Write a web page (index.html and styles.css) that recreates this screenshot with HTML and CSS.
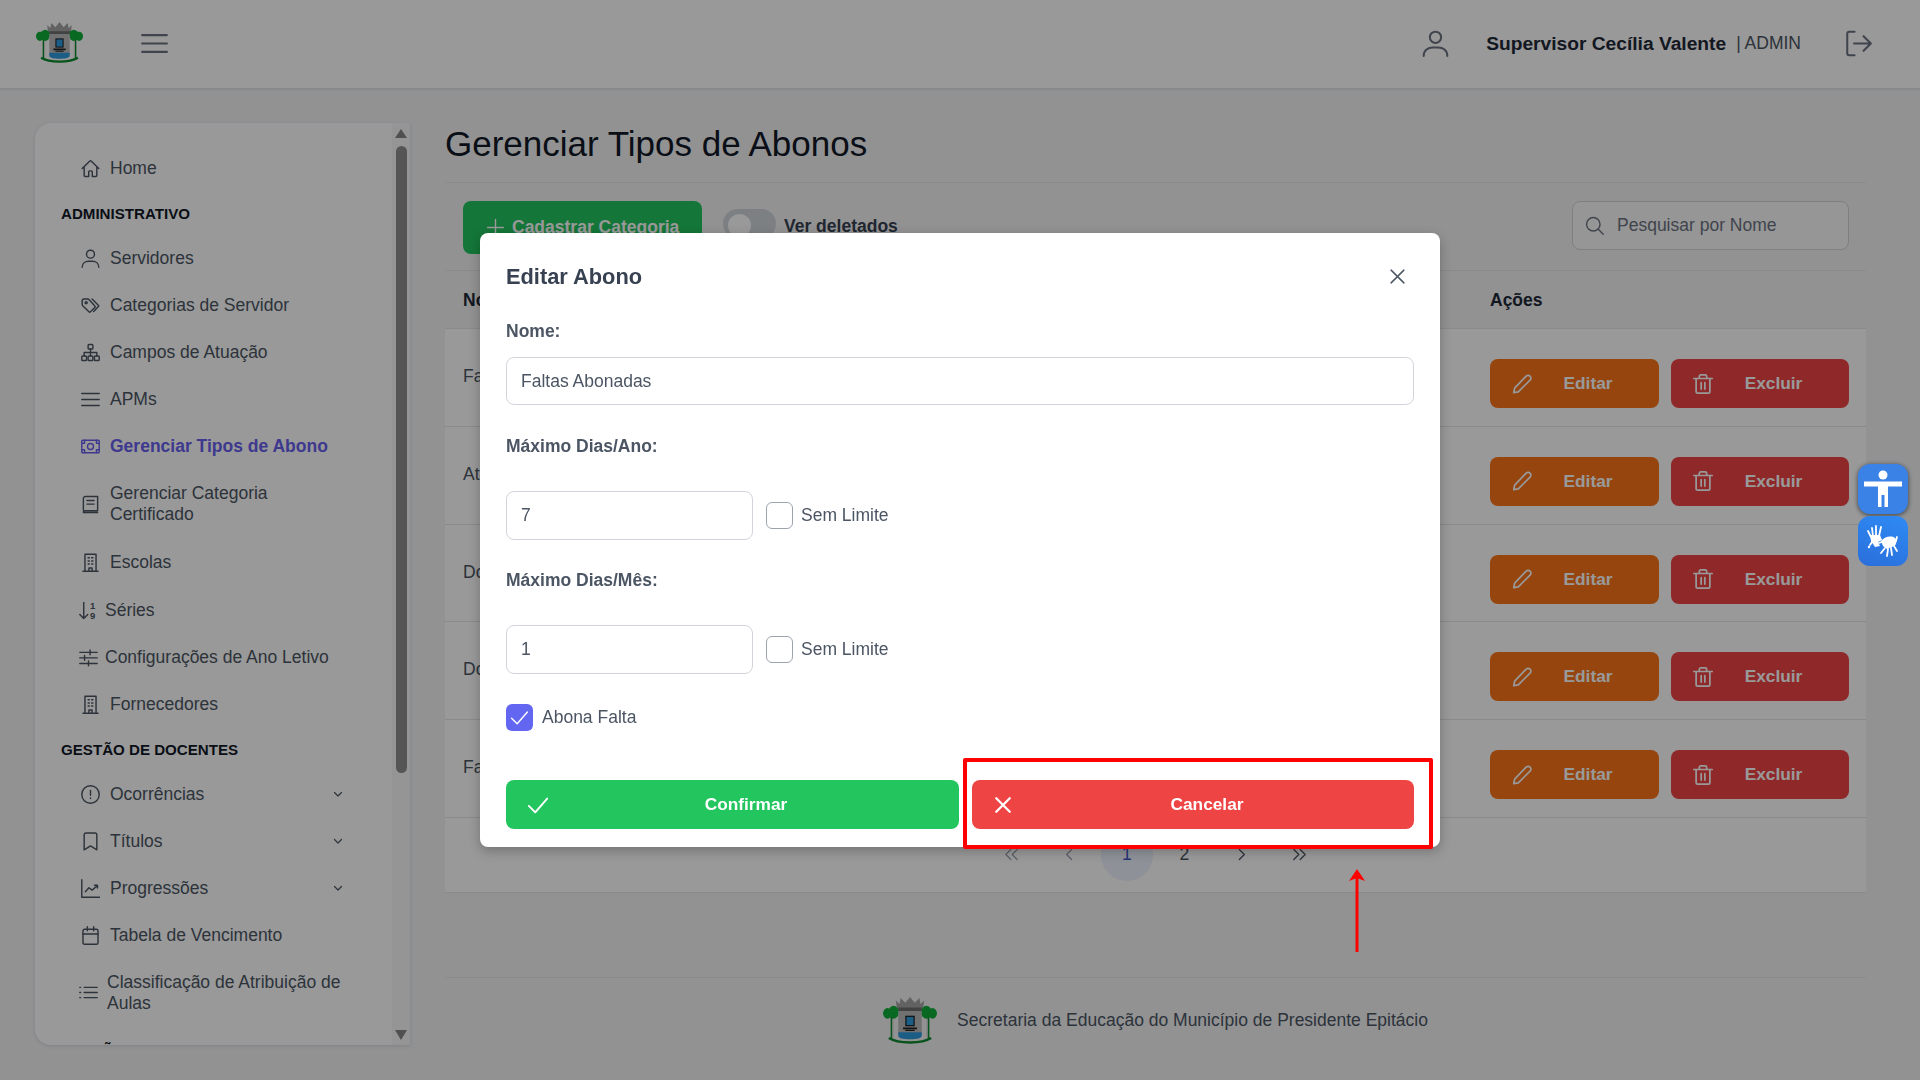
FILE: index.html
```html
<!DOCTYPE html>
<html lang="pt-BR">
<head>
    <meta charset="UTF-8">
    <title>Gerenciar Tipos de Abonos</title>
    <link rel="stylesheet" href="styles.css">
</head>
<body>

<!-- icon sheet -->
<svg class="sprite" xmlns="http://www.w3.org/2000/svg">
    <symbol id="i-home" viewBox="0 0 24 24"><path d="M1.500 12l9.700-9.500c.44-.439 1.152-.439 1.591 0L22.500 12M4 9.500v11.400c0 .621.504 1.125 1.125 1.125H9.750v-5.900c0-.621.504-1.125 1.125-1.125h2.250c.621 0 1.125.504 1.125 1.125V22h4.600c.621 0 1.125-.504 1.125-1.125V9.500"/></symbol>
    <symbol id="i-user" viewBox="0 0 24 24"><circle cx="12" cy="6.500" r="5"/><path d="M1.500 23c0-5 4-7.500 8-7.500h5c4 0 8 2.500 8 7.500"/></symbol>
    <symbol id="i-tag" viewBox="0 0 24 24"><path d="M1.500 6V11c0 .6.300 1 .7 1.400l7.800 7.600c.6.600 1.400.600 2 0l5.500-5.500c.6-.6.600-1.400 0-2L10 4.300C9.500 3.900 9.100 3.700 8.500 3.700H3.800C2.500 3.700 1.500 4.700 1.500 6z"/><path d="M14 3.700l8.200 8.300c.3.300.3.700 0 1L16 19.500"/><circle cx="6.500" cy="8.500" r="1.300"/></symbol>
    <symbol id="i-sitemap" viewBox="0 0 24 24"><rect x="9" y="2" width="6" height="5.500" rx="1"/><rect x="1" y="16.500" width="6" height="5.500" rx="1"/><rect x="9" y="16.500" width="6" height="5.500" rx="1"/><rect x="17" y="16.500" width="6" height="5.500" rx="1"/><path d="M12 7.500v9M4 16.500V12h16v4.500"/></symbol>
    <symbol id="i-bars" viewBox="0 0 24 24"><path d="M1 4.500h22M1 12h22M1 19.500h22"/></symbol>
    <symbol id="i-money" viewBox="0 0 24 24"><rect x="1" y="4" width="22" height="16" rx="1"/><circle cx="12" cy="12" r="3.800"/><path d="M1 8h3.500V4M23 8h-3.500V4M1 16h3.500v4M23 16h-3.500v4"/></symbol>
    <symbol id="i-book" viewBox="0 0 24 24"><path d="M3 19V4.500C3 3.100 4 2 5.500 2h15.500v18H5.500C4 20 3 21 3 22h18"/><path d="M7.500 7h9M7.500 11.500h9"/></symbol>
    <symbol id="i-building" viewBox="0 0 24 24"><path d="M2.500 23h19M5 23V1.500h14V23M10 23v-4h4v4"/><path d="M9 6h1.500M13.500 6H15M9 10h1.500M13.500 10H15M9 14h1.500M13.500 14H15"/></symbol>
    <symbol id="i-sliders" viewBox="0 0 24 24"><path d="M1 5.500h22M1 12.500h22M1 19.500h22M14 2.500v6M7 9.500v6M12 16.500v6"/></symbol>
    <symbol id="i-alert" viewBox="0 0 24 24"><circle cx="12" cy="12" r="11"/><path d="M12 7v6"/><path d="M12 16.500v.5"/></symbol>
    <symbol id="i-bookmark" viewBox="0 0 24 24"><path d="M4 3.500C4 2.200 5 1.200 6.300 1.200h11.400c1.300 0 2.300 1 2.300 2.300v19L12 17.500l-8 5z"/></symbol>
    <symbol id="i-chart" viewBox="0 0 24 24"><path d="M1 1v22h22.500"/><path d="M5.500 16l4.500-5 4 3 6.500-5.500M17 8h3.800v3.500"/></symbol>
    <symbol id="i-calendar" viewBox="0 0 24 24"><rect x="2.500" y="4" width="19" height="19" rx="2"/><path d="M2.500 10h19M8 1v5M16 1v5"/></symbol>
    <symbol id="i-list" viewBox="0 0 24 24"><path d="M6.500 5.500H23M6.500 12H23M6.500 18.500H23M1 5.500h1M1 12h1M1 18.500h1"/></symbol>
    <symbol id="i-chevron" viewBox="0 0 24 24"><path d="M5 9l7 7 7-7"/></symbol>
    <symbol id="i-search" viewBox="0 0 24 24"><circle cx="10.500" cy="10.500" r="8.500"/><path d="M16.500 16.500L23 23"/></symbol>
    <symbol id="i-logout" viewBox="0 0 24 24"><path d="M8.500 1.500H3.800C2.800 1.500 2 2.300 2 3.300v17.400c0 1 .8 1.800 1.800 1.800h4.700M8 12h15M16.500 5.500L23 12l-6.500 6.500"/></symbol>
    <symbol id="i-plus" viewBox="0 0 24 24"><path d="M12 2v20M2 12h20"/></symbol>
    <symbol id="i-pencil" viewBox="0 0 24 24"><path d="M16.500 3.500c1.300-1.300 3.200-1.300 4.300 0 1.200 1.200 1.200 3 0 4.200L8 20.500 3 21.500l1-5z"/></symbol>
    <symbol id="i-trash" viewBox="0 0 24 24"><path d="M2 6h20M8 6V3.500C8 2.700 8.700 2 9.500 2h5c.8 0 1.500.7 1.500 1.500V6M4.500 6v14.500c0 1 .8 1.500 1.500 1.500h12c.8 0 1.500-.5 1.500-1.500V6M10 10.500v7M14 10.500v7"/></symbol>
    <symbol id="i-check" viewBox="0 0 24 24"><path d="M2 13l7 7L22 5"/></symbol>
    <symbol id="i-close" viewBox="0 0 24 24"><path d="M3 3l18 18M21 3L3 21"/></symbol>
    <symbol id="i-emblem" viewBox="0 0 46 41">
        <path fill="#a3a3a3" d="M11 3l3 3 1-5 4 4 4-5 4 5 4-4 1 5 3-3-1 9H12z"/>
        <path fill="#6e6e6e" d="M13 9h20v3H13z"/>
        <ellipse cx="3.800" cy="14" rx="3.800" ry="4.500" fill="#0fae3a"/>
        <ellipse cx="9" cy="13" rx="4.500" ry="5.500" fill="#0fae3a"/>
        <ellipse cx="37" cy="13" rx="4.500" ry="5.500" fill="#0fae3a"/>
        <ellipse cx="42.200" cy="14" rx="3.800" ry="4.500" fill="#0fae3a"/>
        <path fill="#0c8a2e" d="M6.500 17H8V36H6.500zM38 17H39.500V36H38z"/>
        <path fill="#d8d8d8" d="M8 19H9V35H8zM37 19H38V35H37z"/>
        <path fill="#bcbcbc" d="M13 12h20v19H13z"/>
        <rect x="19.500" y="16.500" width="7" height="8" fill="#2f9be0" stroke="#1a1a1a"/>
        <path fill="#222" d="M17 26h12v1.500H17zM19 28h8v1H19z"/>
        <path fill="#2f9be0" d="M13 30h20v3c0 2-4 3-10 3s-10-1-10-3z"/>
        <path fill="none" stroke="#0c8a2e" stroke-width="2.200" d="M5 35c8 5 28 5 36 0"/>
    </symbol>
</svg>

<header class="topbar">
    <div class="topbar-left">
        <svg class="logo"><use href="#i-emblem"/></svg>
        <svg class="ico hamburger"><use href="#i-bars"/></svg>
    </div>
    <div class="topbar-right">
        <svg class="ico user-ico"><use href="#i-user"/></svg>
        <span class="user-name">Supervisor Cecília Valente</span>
        <span class="user-role">| ADMIN</span>
        <svg class="ico logout-ico"><use href="#i-logout"/></svg>
    </div>
</header>

<div class="layout">
    <aside class="sidebar">
        <nav class="menu">
            <a class="item"><svg class="ico"><use href="#i-home"/></svg><span>Home</span></a>
            <div class="section">ADMINISTRATIVO</div>
            <a class="item"><svg class="ico"><use href="#i-user"/></svg><span>Servidores</span></a>
            <a class="item"><svg class="ico"><use href="#i-tag"/></svg><span>Categorias de Servidor</span></a>
            <a class="item"><svg class="ico"><use href="#i-sitemap"/></svg><span>Campos de Atuação</span></a>
            <a class="item"><svg class="ico"><use href="#i-bars"/></svg><span>APMs</span></a>
            <a class="item active"><svg class="ico"><use href="#i-money"/></svg><span>Gerenciar Tipos de Abono</span></a>
            <a class="item two-line"><svg class="ico"><use href="#i-book"/></svg><span>Gerenciar Categoria Certificado</span></a>
            <a class="item"><svg class="ico"><use href="#i-building"/></svg><span>Escolas</span></a>
            <a class="item tight">
                <svg class="ico" viewBox="0 0 24 24"><path d="M6 2v20M1 17l5 5 5-5"/><text class="sort-num" x="14" y="10">1</text><text class="sort-num" x="14" y="23">9</text></svg>
                <span>Séries</span>
            </a>
            <a class="item tight"><svg class="ico"><use href="#i-sliders"/></svg><span>Configurações de Ano Letivo</span></a>
            <a class="item"><svg class="ico"><use href="#i-building"/></svg><span>Fornecedores</span></a>
            <div class="section">GESTÃO DE DOCENTES</div>
            <a class="item"><svg class="ico"><use href="#i-alert"/></svg><span>Ocorrências</span><svg class="ico chevron"><use href="#i-chevron"/></svg></a>
            <a class="item"><svg class="ico"><use href="#i-bookmark"/></svg><span>Títulos</span><svg class="ico chevron"><use href="#i-chevron"/></svg></a>
            <a class="item"><svg class="ico"><use href="#i-chart"/></svg><span>Progressões</span><svg class="ico chevron"><use href="#i-chevron"/></svg></a>
            <a class="item"><svg class="ico"><use href="#i-calendar"/></svg><span>Tabela de Vencimento</span></a>
            <a class="item two-line list-item"><svg class="ico"><use href="#i-list"/></svg><span>Classificação de Atribuição de Aulas</span></a>
            <div class="section">GESTÃO ESCOLAR</div>
        </nav>
        <div class="scrollbar">
            <span class="arrow-up"></span>
            <span class="thumb"></span>
            <span class="arrow-down"></span>
        </div>
    </aside>

    <main class="main">
        <h1 class="page-title">Gerenciar Tipos de Abonos</h1>

        <div class="toolbar">
            <button class="btn-add"><svg class="ico"><use href="#i-plus"/></svg>Cadastrar Categoria</button>
            <span class="toggle"><span class="knob"></span></span>
            <span class="toggle-label">Ver deletados</span>
            <div class="search">
                <svg class="ico"><use href="#i-search"/></svg>
                <span>Pesquisar por Nome</span>
            </div>
        </div>

        <div class="row row-head">
            <div class="cell-name">Nome</div>
            <div class="cell-actions">Ações</div>
        </div>

        <div class="rows">
            <div class="row">
                <div class="cell-name">Faltas Abonadas</div>
                <div class="cell-actions">
                    <button class="btn btn-edit"><svg class="ico"><use href="#i-pencil"/></svg><span>Editar</span></button>
                    <button class="btn btn-del"><svg class="ico"><use href="#i-trash"/></svg><span>Excluir</span></button>
                </div>
            </div>
            <div class="row">
                <div class="cell-name">Atestado Médico</div>
                <div class="cell-actions">
                    <button class="btn btn-edit"><svg class="ico"><use href="#i-pencil"/></svg><span>Editar</span></button>
                    <button class="btn btn-del"><svg class="ico"><use href="#i-trash"/></svg><span>Excluir</span></button>
                </div>
            </div>
            <div class="row">
                <div class="cell-name">Doação de Sangue</div>
                <div class="cell-actions">
                    <button class="btn btn-edit"><svg class="ico"><use href="#i-pencil"/></svg><span>Editar</span></button>
                    <button class="btn btn-del"><svg class="ico"><use href="#i-trash"/></svg><span>Excluir</span></button>
                </div>
            </div>
            <div class="row">
                <div class="cell-name">Doença em Família</div>
                <div class="cell-actions">
                    <button class="btn btn-edit"><svg class="ico"><use href="#i-pencil"/></svg><span>Editar</span></button>
                    <button class="btn btn-del"><svg class="ico"><use href="#i-trash"/></svg><span>Excluir</span></button>
                </div>
            </div>
            <div class="row">
                <div class="cell-name">Falecimento</div>
                <div class="cell-actions">
                    <button class="btn btn-edit"><svg class="ico"><use href="#i-pencil"/></svg><span>Editar</span></button>
                    <button class="btn btn-del"><svg class="ico"><use href="#i-trash"/></svg><span>Excluir</span></button>
                </div>
            </div>

            <div class="pagination">
                <span class="page off"><svg class="ico" viewBox="0 0 24 24"><path d="M11 5l-7 7 7 7M20 5l-7 7 7 7"/></svg></span>
                <span class="page off"><svg class="ico" viewBox="0 0 24 24"><path d="M15 5l-7 7 7 7"/></svg></span>
                <span class="page current">1</span>
                <span class="page">2</span>
                <span class="page"><svg class="ico" viewBox="0 0 24 24"><path d="M9 5l7 7-7 7"/></svg></span>
                <span class="page"><svg class="ico" viewBox="0 0 24 24"><path d="M4 5l7 7-7 7M13 5l7 7-7 7"/></svg></span>
            </div>
        </div>

        <footer class="footer">
            <svg class="footer-logo"><use href="#i-emblem"/></svg>
            <span>Secretaria da Educação do Município de Presidente Epitácio</span>
        </footer>
    </main>
</div>

<div class="overlay"></div>

<!-- modal -->
<div class="modal">
    <div class="modal-head">
        <h2>Editar Abono</h2>
        <svg class="ico"><use href="#i-close"/></svg>
    </div>

    <label class="field-label label-nome">Nome:</label>
    <input class="input input-full" type="text" value="Faltas Abonadas">

    <label class="field-label label-ano">Máximo Dias/Ano:</label>
    <div class="limit-row">
        <input class="input input-small" type="text" value="7">
        <span class="check"></span>
        <span>Sem Limite</span>
    </div>

    <label class="field-label label-mes">Máximo Dias/Mês:</label>
    <div class="limit-row">
        <input class="input input-small" type="text" value="1">
        <span class="check"></span>
        <span>Sem Limite</span>
    </div>

    <div class="abona-row">
        <span class="check checked"><svg class="ico"><use href="#i-check"/></svg></span>
        <span>Abona Falta</span>
    </div>

    <div class="modal-actions">
        <button class="btn btn-ok"><svg class="ico"><use href="#i-check"/></svg><span>Confirmar</span></button>
        <button class="btn btn-cancel"><svg class="ico"><use href="#i-close"/></svg><span>Cancelar</span></button>
    </div>
</div>

<!-- accessibility widgets -->
<div class="a11y">
    <div class="a11y-btn a11y-body">
        <svg viewBox="0 0 50 50"><circle cx="25" cy="11" r="4.500"/><path d="M6 17.500h38v5H30v20.500h-3.500V31h-3v12H20V22.500H6z"/></svg>
    </div>
    <div class="a11y-btn a11y-hands">
        <svg viewBox="0 0 50 50">
            <path class="fingers" d="M13 21l-3-6M15 20l-1-8M18 19l0-9M21 20l2-9M14 26l-2 3"/>
            <path d="M12 19h10l2 5-4 2 2 4-5 1-4-6z"/>
            <path class="fingers" d="M27 32l-4 5M30 33l-1 7M33 32l1 7M36 30l3 5M38 25l1-4M26 25l-5 2"/>
            <path d="M23 25c3-4 10-6 14-3 2 2 2 6-1 8l-7 3-4-3z"/>
            <circle cx="11" cy="31" r="1.200"/>
        </svg>
    </div>
</div>

<!-- annotation over the screenshot -->
<div class="mark-box"></div>
<svg class="mark-arrow" viewBox="0 0 20 86"><path d="M10 84V10" stroke="#f00" stroke-width="3" fill="none"/><path d="M10 1l8 12-8-3-8 3z" fill="#f00"/></svg>

</body>
</html>
```

FILE: styles.css
```css
* {
    box-sizing: border-box;
}
html, body {
    margin: 0;
    height: 100%;
}
body {
    width: 1920px;
    height: 1080px;
    overflow: hidden;
    background: #f3f4f6;
    color: #4b5563;
    font-family: "Liberation Sans", Arial, sans-serif;
    font-size: 17.5px;
    line-height: 21px;
}
.sprite {
    display: none;
}
.ico {
    display: block;
    flex: none;
    width: 19px;
    height: 19px;
    fill: none;
    stroke: currentColor;
    stroke-width: 1.8;
    stroke-linecap: round;
    stroke-linejoin: round;
}

/* top bar */
.topbar {
    display: flex;
    align-items: center;
    justify-content: space-between;
    height: 88px;
    padding: 0 48px 2px 36px;
    background: #fff;
    box-shadow: 0 1px 3px rgba(0, 0, 0, .12);
    position: relative;
}
.topbar-left, .topbar-right {
    display: flex;
    align-items: center;
}
.logo {
    width: 47px;
    height: 42px;
    margin-right: 58px;
}
.hamburger {
    width: 27px;
    height: 27px;
    stroke-width: 1.9;
    color: #6b7280;
}
.user-ico {
    width: 27px;
    height: 27px;
    color: #6b7280;
    margin-right: 37px;
}
.user-name {
    font-weight: 700;
    color: #1f2937;
    font-size: 19.2px;
    margin-right: 10px;
}
.user-role {
    color: #4b5563;
    margin-right: 44px;
}
.logout-ico {
    width: 27px;
    height: 27px;
    color: #6b7280;
}

.layout {
    display: flex;
    gap: 35px;
    padding-left: 35px;
}

/* sidebar */
.sidebar {
    display: flex;
    flex: none;
    width: 375px;
    height: 922px;
    margin-top: 35px;
    background: #fff;
    border-radius: 16px 0 0 16px;
    box-shadow: 0 1px 4px rgba(0, 0, 0, .12);
    overflow: hidden;
}
.menu {
    flex: 1;
    padding: 22px 30px 0 26px;
    overflow: hidden;
}
.section {
    display: flex;
    align-items: center;
    height: 43px;
    font-size: 15.12px;
    font-weight: 700;
    color: #111827;
}
.item {
    display: flex;
    align-items: center;
    gap: 10px;
    padding: 13.04px 18px 13.04px 20px;
    color: #4b5563;
}
.item.two-line {
    padding-bottom: 14px;
}
.item.tight {
    gap: 7px;
    padding-left: 18px;
}
.list-item {
    gap: 9px;
    padding-left: 18px;
}
.item span {
    flex: 1;
}
.item.active {
    color: #6860ee;
    font-weight: 700;
}
.chevron {
    width: 12px;
    height: 12px;
    stroke-width: 2.4;
}
.sort-num {
    font-family: "Liberation Sans", Arial, sans-serif;
    font-size: 12px;
    font-weight: 700;
    fill: currentColor;
    stroke: none;
}
.scrollbar {
    display: flex;
    flex: none;
    flex-direction: column;
    align-items: center;
    width: 18px;
    background: #f8f8f8;
}
.arrow-up, .arrow-down {
    width: 0;
    height: 0;
    border-left: 6.5px solid transparent;
    border-right: 6.5px solid transparent;
}
.arrow-up {
    margin-top: 6px;
    border-bottom: 9px solid #858585;
}
.arrow-down {
    margin-top: 257px;
    border-top: 10px solid #858585;
}
.thumb {
    width: 11px;
    height: 627px;
    margin-top: 8px;
    border-radius: 6px;
    background: #8e8e8e;
}

/* main column */
.main {
    flex: none;
    width: 1421px;
}
.page-title {
    height: 95px;
    margin: 0;
    padding-top: 36px;
    border-bottom: 1px solid #e5e7eb;
    font-size: 35px;
    line-height: 40px;
    font-weight: 400;
    color: #111827;
}
.toolbar {
    display: flex;
    align-items: flex-start;
    height: 88px;
    padding: 18px 17px 0 18px;
    border-bottom: 1px solid #e5e7eb;
}
.btn-add {
    display: flex;
    align-items: center;
    gap: 7px;
    width: 239px;
    height: 53px;
    padding: 0 0 0 23px;
    border: 0;
    border-radius: 8px;
    background: #22c55e;
    color: #fff;
    font: 700 17.5px "Liberation Sans", Arial, sans-serif;
}
.toggle {
    display: block;
    width: 53px;
    height: 29px;
    margin: 8px 8px 0 21px;
    padding: 5px;
    border-radius: 15px;
    background: #d1d5db;
}
.knob {
    display: block;
    width: 23px;
    height: 23px;
    border-radius: 50%;
    background: #fff;
}
.toggle-label {
    margin-top: 15px;
    font-weight: 700;
    color: #374151;
}
.search {
    display: flex;
    align-items: center;
    gap: 13px;
    width: 277px;
    height: 49px;
    margin-left: auto;
    padding-left: 12px;
    border: 1px solid #d1d5db;
    border-radius: 8px;
    background: #fafafa;
    color: #6b7280;
}

/* table */
.row {
    display: flex;
    justify-content: space-between;
    height: 97.8px;
    border-bottom: 1px solid #e5e7eb;
}
.row-head {
    align-items: center;
    height: 58px;
    padding-top: 1px;
    font-weight: 700;
    color: #1f2937;
}
.rows {
    background: #fff;
}
.cell-name {
    padding-left: 18px;
}
.rows .cell-name {
    padding-top: 37px;
}
.cell-actions {
    display: flex;
    gap: 12px;
    width: 376px;
}
.rows .cell-actions {
    padding-top: 30px;
}
.btn {
    display: flex;
    align-items: center;
    height: 49px;
    padding: 0 20px 0 23px;
    border: 0;
    border-radius: 8px;
    color: #fff;
    font: 700 17.3px "Liberation Sans", Arial, sans-serif;
}
.btn .ico {
    width: 22px;
    height: 22px;
    margin: 0 4px 0 -2px;
    stroke-width: 1.9;
}
.btn span {
    flex: 1;
    text-align: center;
}
.btn-edit {
    width: 169px;
    background: #f97316;
}
.btn-del {
    width: 178px;
    background: #ef4444;
}
.pagination {
    display: flex;
    align-items: center;
    justify-content: center;
    height: 75px;
    border-bottom: 1px solid #e5e7eb;
}
.page {
    display: flex;
    align-items: center;
    justify-content: center;
    width: 52px;
    height: 52px;
    margin: 0 2.75px;
    border-radius: 50%;
    color: #4b5563;
}
.page .ico {
    width: 17px;
    height: 17px;
}
.page.off {
    color: #9ca3af;
}
.page.current {
    background: #eef2ff;
    color: #4059c4;
}

/* footer */
.footer {
    display: flex;
    align-items: center;
    justify-content: center;
    gap: 20px;
    margin-top: 84px;
    padding-top: 18px;
    border-top: 1px solid #e5e7eb;
}
.footer-logo {
    width: 54px;
    height: 50px;
}

.overlay {
    position: fixed;
    inset: 0;
    background: rgba(0, 0, 0, .4);
}

/* modal */
.modal {
    position: absolute;
    left: 480px;
    top: 233px;
    width: 960px;
    height: 614px;
    padding: 29px 26px 18px;
    border-radius: 8px;
    background: #fff;
    box-shadow: 0 4px 12px rgba(0, 0, 0, .25);
}
.modal-head {
    display: flex;
    align-items: center;
    justify-content: space-between;
    height: 28px;
    padding-right: 8px;
    margin-bottom: 31px;
}
.modal-head h2 {
    margin: 0;
    font-size: 21.8px;
    font-weight: 700;
    color: #374151;
}
.modal-head .ico {
    width: 17px;
    height: 17px;
    stroke-width: 2;
}
.field-label {
    display: block;
    font-weight: 700;
    color: #4b5563;
}
.label-nome {
    margin-bottom: 15px;
}
.label-ano {
    margin: 31px 0 34px;
}
.label-mes {
    margin: 30px 0 34px;
}
.input {
    display: block;
    height: 49px;
    padding: 0 14px;
    border: 1px solid #d1d5db;
    border-radius: 8px;
    background: #fff;
    color: #4b5563;
    font: 17.5px "Liberation Sans", Arial, sans-serif;
}
.input-full {
    width: 100%;
    height: 48px;
}
.input-small {
    width: 247px;
}
.limit-row, .abona-row {
    display: flex;
    align-items: center;
}
.limit-row .check {
    margin: 0 8px 0 13px;
}
.check {
    display: flex;
    align-items: center;
    justify-content: center;
    flex: none;
    width: 27px;
    height: 27px;
    border: 1px solid #9ca3af;
    border-radius: 6px;
}
.check.checked {
    border: 0;
    background: #6366f1;
    color: #fff;
}
.abona-row {
    margin: 30px 0 49px;
}
.abona-row .check {
    margin-right: 9px;
}
.modal-actions {
    display: flex;
    gap: 13px;
}
.btn-ok {
    width: 453px;
    background: #22c55e;
}
.btn-ok .ico {
    stroke-width: 2.1;
}
.btn-cancel {
    flex: 1;
    background: #ef4444;
}
.btn-cancel .ico {
    width: 18px;
    height: 18px;
    margin: 0 8px 0 -1px;
    stroke-width: 3;
}

/* accessibility buttons sit above the overlay */
.a11y {
    position: fixed;
    left: 1858px;
    top: 464px;
    display: flex;
    flex-direction: column;
    gap: 2px;
}
.a11y-btn {
    width: 50px;
    height: 50px;
    border-radius: 12px;
}
.a11y-btn svg {
    display: block;
    width: 50px;
    height: 50px;
    fill: #fff;
}
.a11y-body {
    background: #3b82e6;
    box-shadow: 0 1px 5px rgba(0, 0, 0, .6);
}
.a11y-hands {
    background: linear-gradient(200deg, #2f8bf4, #2a6edb);
}
.fingers {
    fill: none;
    stroke: #fff;
    stroke-width: 1.800;
    stroke-linecap: round;
}

/* red annotation */
.mark-box {
    position: absolute;
    left: 963px;
    top: 758px;
    width: 470px;
    height: 91px;
    border: 4px solid #f00;
    border-radius: 2px;
}
.mark-arrow {
    position: absolute;
    left: 1347px;
    top: 868px;
    width: 20px;
    height: 86px;
}
```
